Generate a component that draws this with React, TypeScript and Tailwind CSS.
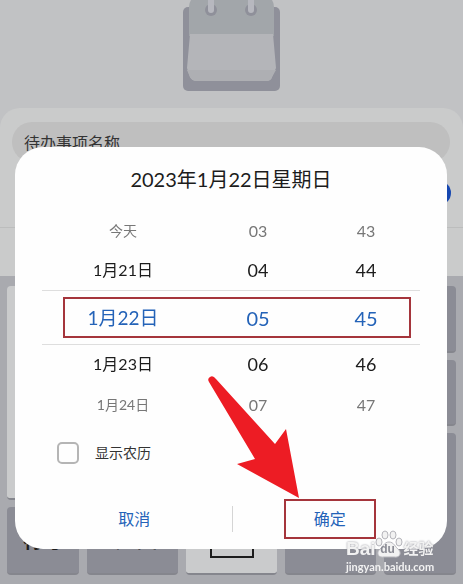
import { useState } from "react";
import clsx from "clsx";

const DAYS = ["今天", "1月21日", "1月22日", "1月23日", "1月24日"];
const HOURS = ["03", "04", "05", "06", "07"];
const MINUTES = ["43", "44", "45", "46", "47"];

// Row heights and text styles, counted from the top of the wheel
const ROW_HEIGHT = ["h-9", "h-[42px]", "h-[54px]", "h-[38px]", "h-11"];
const DAY_TEXT = ["text-sm", "text-base", "text-[19px]", "text-base", "text-sm"];
const NUM_TEXT = ["text-base", "text-lg", "text-[20px]", "text-lg", "text-base"];
const ROW_COLOR = ["text-[#777]", "text-[#1c1c1c]", "text-[#2463b8]", "text-[#1c1c1c]", "text-[#777]"];

const KEY = "rounded-[4px] border-b-2 border-[#85868d]";

function Wheel({ label, items, sizes }: { label: string; items: string[]; sizes: string[] }) {
  return (
    <ul aria-label={label} className="text-center">
      {items.map((item, i) => (
        <li
          key={item}
          className={clsx("flex items-center justify-center whitespace-nowrap", ROW_HEIGHT[i], sizes[i], ROW_COLOR[i])}
        >
          {item}
        </li>
      ))}
    </ul>
  );
}

function Calendar() {
  return (
    <svg viewBox="0 0 98 92" className="h-[92px] w-[98px]" aria-hidden="true">
      <rect x="0" y="7" width="97" height="84" rx="5" fill="#8f909a" />
      <path d="M8 0H89Q91 3 91 7V36H6V7Q6 3 8 0Z" fill="#a2a6aa" />
      <path d="M7 34H90L93 68L89 77Q88 81 83 81H14Q9 81 7 77L4 68Z" fill="#b4b5b9" />
      <path d="M4 70H93L89 77Q88 81 83 81H14Q9 81 7 77Z" fill="#aeafb3" />
      <circle cx="28" cy="10" r="6" fill="#8f909a" />
      <circle cx="68" cy="10" r="6" fill="#8f909a" />
      <path d="M28 0V10M68 0V10" stroke="#b7b8bf" strokeWidth="6" strokeLinecap="round" />
    </svg>
  );
}

function Keyboard() {
  return (
    <div className="grid h-[308px] grid-cols-[72px_1fr_1fr_1fr_72px] grid-rows-[67px_66px_67px_68px] gap-x-2 gap-y-[7px] bg-[#a9aaaf] px-[7px] pt-[10px] text-xl text-[#1c1c1c]">
      <div className={clsx(KEY, "row-span-3 bg-[#cacbcc]")} />
      <div className={clsx(KEY, "bg-[#cacbcc]")} />
      <div className={clsx(KEY, "bg-[#cacbcc]")} />
      <div className={clsx(KEY, "bg-[#cacbcc]")} />
      <div className={clsx(KEY, "bg-[#8b8c95]")} />
      <div className="col-span-3 row-span-2" />
      <div className={clsx(KEY, "bg-[#8b8c95]")} />
      <div className={clsx(KEY, "row-span-2 bg-[#8b8c95]")} />
      <div className={clsx(KEY, "flex items-center justify-center bg-[#8b8c95] font-bold")}>符号</div>
      <div className={clsx(KEY, "flex items-center justify-center bg-[#8b8c95]")}>中/英</div>
      <div className={clsx(KEY, "flex items-center justify-center bg-[#cacbcc]")}>
        <svg viewBox="0 0 44 16" className="mt-6 h-4 w-11" fill="none" stroke="#1c1c1c" strokeWidth="2" aria-hidden="true">
          <path d="M1 4V13H43V4" />
        </svg>
      </div>
      <div className={clsx(KEY, "bg-[#8b8c95]")} />
    </div>
  );
}

function Watermark() {
  return (
    <div className="pointer-events-none fixed right-[27px] bottom-[9px] z-20 w-[90px] font-['Liberation_Sans','Noto_Sans_CJK_SC',sans-serif] text-[#f2f2f2]">
      <div className="flex h-5 items-center text-[19px] font-bold [text-shadow:0_0_2px_#8b8c95]">
        <span>Bai</span>
        <span className="relative flex h-4 w-6 items-center justify-center">
          <svg viewBox="0 0 28 32" className="absolute -top-3 -left-px h-8 w-7" fill="#f2f2f2" stroke="#b4b4ba" strokeWidth="1" aria-hidden="true">
            <ellipse cx="4" cy="13" rx="3" ry="4" />
            <ellipse cx="10" cy="6" rx="3" ry="4" />
            <ellipse cx="18" cy="6" rx="3" ry="4" />
            <ellipse cx="24" cy="13" rx="3" ry="4" />
            <path d="M14 13C9 13 8 18 4 21C1 25 4 29 9 28H19C24 29 27 25 24 21C20 18 19 13 14 13Z" />
          </svg>
          <span className="relative text-xs text-[#8b8c95] [text-shadow:none]">du</span>
        </span>
        <span className="ml-1 text-[15px] whitespace-nowrap">经验</span>
      </div>
      <div className="font-['Lato',sans-serif] text-[11px] leading-4 font-bold">jingyan.baidu.com</div>
    </div>
  );
}

export default function App() {
  const [lunar, setLunar] = useState(false);

  return (
    <div className="min-h-screen overflow-hidden bg-[#c1c2c4] font-['Lato','Noto_Sans_CJK_SC',sans-serif]">
      <header className="flex h-[108px] justify-center">
        <Calendar />
      </header>

      <main className="h-[168px] rounded-t-[20px] bg-[#cacbcb] pt-[14px]">
        <input
          type="text"
          aria-label="待办事项名称"
          placeholder="待办事项名称"
          className="ml-3 block h-10 w-[calc(100%-25px)] rounded-full bg-[#bfbfbf] px-3 text-base text-[#333] placeholder:text-[#333]"
        />
        <div className="flex h-[66px] items-center justify-end border-b border-[#bcbdbd] px-3">
          <button type="button" aria-label="保存" className="mb-1 size-6 rounded-full bg-[#1647b0]" />
        </div>
      </main>

      <Keyboard />

      <section
        role="dialog"
        aria-labelledby="picker-title"
        className="fixed right-4 bottom-[35px] left-[15px] z-10 rounded-[28px] bg-[#fefefe] pt-4"
      >
        <h1 id="picker-title" className="text-center text-[20px] leading-8 text-[#1c1c1c]">
          2023年1月22日星期日
        </h1>

        <div className="relative mt-[18px]">
          <div className="grid grid-cols-[216fr_54fr_162fr] items-start">
            <Wheel label="日期" items={DAYS} sizes={DAY_TEXT} />
            <Wheel label="时" items={HOURS} sizes={NUM_TEXT} />
            <Wheel label="分" items={MINUTES} sizes={NUM_TEXT} />
          </div>
          {/* selected row */}
          <div className="pointer-events-none absolute inset-x-[27px] top-[77px] h-[55px] border-y border-[#dedede]" />
          <div className="pointer-events-none absolute right-9 left-12 top-[84px] h-[41px] border-2 border-[#a5353c]" />
        </div>

        <label className="mt-[14px] ml-[42px] flex h-6 items-center gap-4 text-sm text-[#333]">
          <input
            type="checkbox"
            checked={lunar}
            onChange={(e) => setLunar(e.target.checked)}
            className="size-[22px] appearance-none rounded-[5px] border-2 border-[#b5b5b5] checked:bg-[#2463b8]"
          />
          显示农历
        </label>

        <div className="mt-[34px] flex h-10 items-center text-base text-[#2463b8]">
          <button type="button" className="h-10 flex-1 pl-[22px]">
            取消
          </button>
          <div className="h-[26px] w-px bg-[#d5d5d5]" />
          <div className="flex flex-1 justify-center pr-5">
            <button type="button" className="h-10 w-[92px] border-2 border-[#a5353c]">
              确定
            </button>
          </div>
        </div>
        <div className="h-[10px]" />

        {/* pointer to the confirm button */}
        <svg viewBox="0 0 94 124" className="pointer-events-none absolute right-[146px] bottom-[50px] h-[124px] w-[94px]" aria-hidden="true">
          <path d="M3 2Q6 0 9 4L68 69L79 54L92 123L30 89L48 84L2 7Q0 4 3 2Z" fill="#ed1c24" />
        </svg>
      </section>

      <Watermark />
    </div>
  );
}
